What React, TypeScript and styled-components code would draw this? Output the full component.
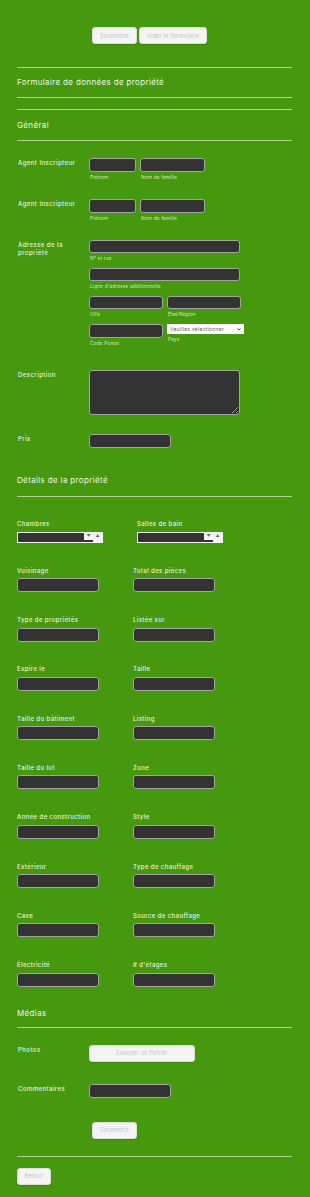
import React from "react";
import styled, { createGlobalStyle } from "styled-components";

const GlobalStyle = createGlobalStyle`
  html, body {
    margin: 0;
    padding: 0;
    background: #46980f;
  }
  body {
    font-family: Inter, "Liberation Sans", sans-serif;
  }
  * {
    box-sizing: border-box;
  }
`;

const Page = styled.div`
  width: 310px;
  min-height: 1197px;
  padding: 27px 18px 12px 17px;
  background: #46980f;
  color: #e8f2e0;
  display: flex;
  flex-direction: column;
`;

const ButtonRow = styled.div<{ $top?: number; $left?: number }>`
  display: flex;
  gap: 2px;
  padding-left: ${(p) => p.$left ?? 75}px;
  margin-top: ${(p) => p.$top ?? 0}px;
`;

const Button = styled.button<{ $w: number }>`
  width: ${(p) => p.$w}px;
  height: 17px;
  padding: 0;
  border: 1px solid #dedede;
  border-radius: 3px;
  background: #f4f4f4;
  color: #c4c4c4;
  font-family: inherit;
  font-size: 5.5px;
  letter-spacing: 0.25px;
  box-shadow: 0 1px 1px rgba(0, 0, 0, 0.12);
  flex-shrink: 0;
`;

const Divider = styled.hr<{ $top: number }>`
  margin: ${(p) => p.$top}px 0 0;
  border: 0;
  height: 1px;
  background: rgba(222, 238, 208, 0.7);
`;

const Heading = styled.h2<{ $top?: number; $bottom?: number }>`
  margin: ${(p) => p.$top ?? 8}px 0 ${(p) => p.$bottom ?? 9}px;
  font-size: 8px;
  line-height: 12px;
  font-weight: 400;
  letter-spacing: 0.35px;
  color: #eef6e8;
`;

const Row = styled.div<{ $top: number }>`
  display: flex;
  align-items: flex-start;
  margin-top: ${(p) => p.$top}px;
`;

const RowLabel = styled.div`
  width: 72px;
  flex-shrink: 0;
  padding: 1px 4px 0 1px;
  font-size: 6px;
  line-height: 8px;
  font-weight: 500;
  letter-spacing: 0.45px;
`;

const Fields = styled.div`
  display: flex;
  flex-direction: column;
  gap: 7px;
`;

const FieldLine = styled.div`
  display: flex;
  gap: 4px;
`;

const SubField = styled.div`
  display: flex;
  flex-direction: column;
`;

const SubLabel = styled.span`
  margin-top: 2px;
  font-size: 4.8px;
  line-height: 6px;
  letter-spacing: 0.15px;
  color: #d3e6c4;
  padding-left: 1px;
`;

const TextInput = styled.input<{ $w: number; $h?: number }>`
  width: ${(p) => p.$w}px;
  height: ${(p) => p.$h ?? 14}px;
  margin: 0;
  padding: 0 3px;
  background: #333333;
  border: 1px solid #a4a4a4;
  border-radius: 3px;
  outline: none;
  color: #fff;
  font-size: 6px;
`;

const TextArea = styled.textarea`
  width: 151px;
  height: 45px;
  margin: 0;
  padding: 2px 3px;
  background: #333333;
  border: 1px solid #a4a4a4;
  border-radius: 3px;
  outline: none;
  color: #fff;
  font-size: 6px;
  display: block;
`;

const FakeSelect = styled.div`
  width: 77px;
  height: 10px;
  background: #ffffff;
  display: flex;
  align-items: center;
  justify-content: space-between;
  padding: 0 3px 0 3px;
  font-size: 5px;
  color: #5e5e5e;
  letter-spacing: 0.25px;
`;

const Grid = styled.div`
  display: flex;
  flex-direction: column;
  gap: 22.8px;
  margin-top: 21.5px;
`;

const GridRow = styled.div`
  display: grid;
  grid-template-columns: 116px 1fr;
`;

const GridCell = styled.div<{ $shift?: number }>`
  display: flex;
  flex-direction: column;
  padding-left: ${(p) => p.$shift ?? 0}px;
`;

const CellLabel = styled.label<{ $gap?: number }>`
  font-size: 6px;
  line-height: 9px;
  font-weight: 500;
  letter-spacing: 0.4px;
  margin-bottom: ${(p) => p.$gap ?? 3.5}px;
`;

const NumberBox = styled.div`
  width: 86px;
  height: 11px;
  display: flex;
  background: #f3f3f3;
  border: 1px solid #f3f3f3;
`;

const NumberValue = styled.div`
  width: 66px;
  height: 100%;
  background: #333333;
  border-radius: 1px;
`;

const Spinner = styled.div`
  flex: 1;
  display: flex;
  align-items: flex-start;
  justify-content: space-around;
  padding-top: 0.5px;
  font-size: 3.6px;
  line-height: 5px;
  color: #555;
  background: linear-gradient(to top, #333 0 2px, transparent 2px) no-repeat left bottom / 9px 100%;
`;

const Chevron = () => (
  <svg width="4" height="3" viewBox="0 0 8 6">
    <path d="M1 1l3 3 3-3" fill="none" stroke="#333" strokeWidth="1.8" />
  </svg>
);

const NumberInput = () => (
  <NumberBox>
    <NumberValue />
    <Spinner>
      <span>▼</span>
      <span>▲</span>
    </Spinner>
  </NumberBox>
);

const pairs: [string, string][] = [
  ["Voisinage", "Total des pièces"],
  ["Type de propriétés", "Listée sur"],
  ["Expire le", "Taille"],
  ["Taille du bâtiment", "Listing"],
  ["Taille du lot", "Zone"],
  ["Année de construction", "Style"],
  ["Extérieur", "Type de chauffage"],
  ["Cave", "Source de chauffage"],
  ["Électricité", "# d'étages"],
];

export default function App() {
  return (
    <>
      <GlobalStyle />
      <Page>
        <ButtonRow>
          <Button $w={45}>Soumettre</Button>
          <Button $w={68}>Vider le formulaire</Button>
        </ButtonRow>

        <Divider $top={23} />
        <Heading>Formulaire de données de propriété</Heading>
        <Divider $top={0} />
        <Divider $top={11} />
        <Heading $top={9}>Général</Heading>
        <Divider $top={0} />

        <Row $top={17}>
          <RowLabel>Agent Inscripteur</RowLabel>
          <FieldLine>
            <SubField>
              <TextInput $w={47} />
              <SubLabel>Prénom</SubLabel>
            </SubField>
            <SubField>
              <TextInput $w={65} />
              <SubLabel>Nom de famille</SubLabel>
            </SubField>
          </FieldLine>
        </Row>

        <Row $top={19}>
          <RowLabel>Agent Inscripteur</RowLabel>
          <FieldLine>
            <SubField>
              <TextInput $w={47} />
              <SubLabel>Prénom</SubLabel>
            </SubField>
            <SubField>
              <TextInput $w={65} />
              <SubLabel>Nom de famille</SubLabel>
            </SubField>
          </FieldLine>
        </Row>

        <Row $top={19}>
          <RowLabel>Adresse de la propriété</RowLabel>
          <Fields>
            <SubField>
              <TextInput $w={151} $h={13} />
              <SubLabel>N° et rue</SubLabel>
            </SubField>
            <SubField>
              <TextInput $w={151} $h={13} />
              <SubLabel>Ligne d'adresse additionnelle</SubLabel>
            </SubField>
            <FieldLine>
              <SubField>
                <TextInput $w={74} $h={13} />
                <SubLabel>Ville</SubLabel>
              </SubField>
              <SubField>
                <TextInput $w={74} $h={13} />
                <SubLabel>État/Région</SubLabel>
              </SubField>
            </FieldLine>
            <FieldLine>
              <SubField>
                <TextInput $w={74} />
                <SubLabel>Code Postal</SubLabel>
              </SubField>
              <SubField>
                <FakeSelect>
                  <span>Veuillez sélectionner</span>
                  <Chevron />
                </FakeSelect>
                <SubLabel>Pays</SubLabel>
              </SubField>
            </FieldLine>
          </Fields>
        </Row>

        <Row $top={24}>
          <RowLabel>Description</RowLabel>
          <TextArea />
        </Row>

        <Row $top={19}>
          <RowLabel>Prix</RowLabel>
          <TextInput $w={82} />
        </Row>

        <Heading $top={26} $bottom={10}>
          Détails de la propriété
        </Heading>
        <Divider $top={0} />

        <Grid>
          <GridRow>
            <GridCell>
              <CellLabel $gap={4.5}>Chambres</CellLabel>
              <NumberInput />
            </GridCell>
            <GridCell $shift={4}>
              <CellLabel $gap={4.5}>Salles de bain</CellLabel>
              <NumberInput />
            </GridCell>
          </GridRow>
          {pairs.map(([a, b]) => (
            <GridRow key={a}>
              <GridCell>
                <CellLabel>{a}</CellLabel>
                <TextInput $w={82} />
              </GridCell>
              <GridCell>
                <CellLabel>{b}</CellLabel>
                <TextInput $w={82} />
              </GridCell>
            </GridRow>
          ))}
        </Grid>

        <Heading $top={20} $bottom={8}>Médias</Heading>
        <Divider $top={0} />

        <Row $top={17}>
          <RowLabel>Photos</RowLabel>
          <Button $w={106}>Envoyer un fichier</Button>
        </Row>

        <Row $top={22}>
          <RowLabel>Commentaires</RowLabel>
          <TextInput $w={82} />
        </Row>

        <ButtonRow $top={24}>
          <Button $w={45}>Soumettre</Button>
        </ButtonRow>

        <Divider $top={17} />

        <ButtonRow $top={11} $left={0}>
          <Button $w={34}>Retour</Button>
        </ButtonRow>
      </Page>
    </>
  );
}
